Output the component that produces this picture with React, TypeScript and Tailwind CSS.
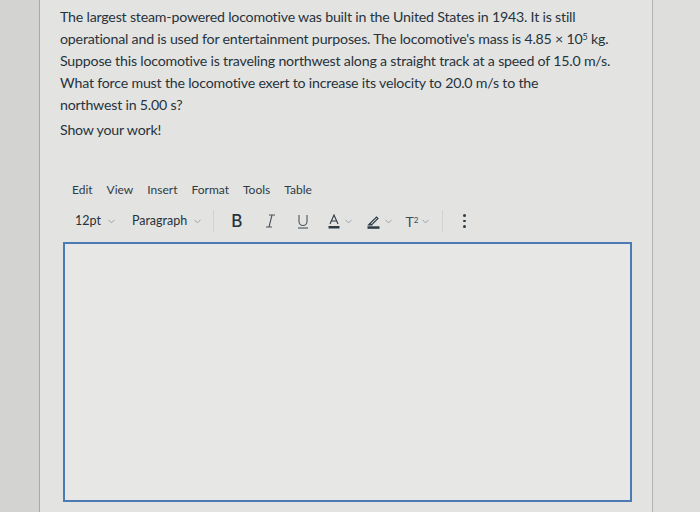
import { ChevronDown } from 'lucide-react';

const lines = [
  'The largest steam-powered locomotive was built in the United States in 1943. It is still',
  null,
  'Suppose this locomotive is traveling northwest along a straight track at a speed of 15.0 m/s.',
  'What force must the locomotive exert to increase its velocity to 20.0 m/s to the',
  'northwest in 5.00 s?',
];

function Caret() {
  return <ChevronDown size={11} strokeWidth={1.5} className="text-[#7a858c]" />;
}

export default function App() {
  return (
    <div
      className="flex h-[512px] w-[700px] overflow-hidden bg-[#dcdcdb] text-[#27333b]"
      style={{ fontFamily: 'Lato, "Open Sans", sans-serif' }}
    >
      <div className="w-[40px] shrink-0 border-r border-[#a9a9a9] bg-[#d3d3d2]" />
      <div className="flex w-[613px] shrink-0 flex-col border-r border-[#b3b3b3] bg-[#e3e3e2]">
        {/* Question text */}
        <div className="pl-[20px] pt-[6px] text-[14.2px] leading-[22px] tracking-[-0.2px]">
          {lines.map((l, i) =>
            l === null ? (
              <div key={i} className="whitespace-nowrap">
                operational and is used for entertainment purposes. The locomotive's mass is 4.85 × 10
                <sup className="text-[9px]">5</sup> kg.
              </div>
            ) : (
              <div key={i} className="whitespace-nowrap">{l}</div>
            )
          )}
          <div className="mt-[3px]">Show your work!</div>
        </div>

        {/* Menu bar */}
        <div className="ml-[32px] mt-[40px] flex gap-[14px] text-[12px] text-[#2d3b45]">
          <span>Edit</span>
          <span>View</span>
          <span>Insert</span>
          <span>Format</span>
          <span>Tools</span>
          <span>Table</span>
        </div>

        {/* Toolbar */}
        <div className="ml-[35px] mt-[11px] flex h-[22px] items-center text-[12.5px]">
          <span className="flex items-center gap-[5px]">12pt <Caret /></span>
          <span className="ml-[15px] flex items-center gap-[5px]">Paragraph <Caret /></span>
          <div className="ml-[10px] h-[22px] w-px bg-[#cfd3d5]" />
          <span className="ml-[17px] text-[17px] font-medium leading-none" style={{ fontFamily: 'Inter, "Liberation Sans", sans-serif' }}>B</span>
          <svg className="ml-[23px]" width="10" height="14" viewBox="0 0 10 14" fill="none" stroke="#4a555c" strokeWidth="1.1">
            <path d="M4 1 H10 M1 13 H7 M7 1 L4 13" />
          </svg>
          <svg className="ml-[22px]" width="12" height="15" viewBox="0 0 12 15" fill="none" stroke="#4a555c" strokeWidth="1.1">
            <path d="M2 1 V7.5 A4 4 0 0 0 10 7.5 V1" />
            <path d="M1 14 H11" />
          </svg>
          <span className="ml-[19px] flex items-center gap-[3px]">
            <svg width="12" height="15" viewBox="0 0 12 15" fill="none" stroke="#2d3b45" strokeWidth="1.1">
              <path d="M2 10 L6 1 L10 10 M3.4 7 H8.6" />
              <rect x="0.5" y="12" width="11" height="2.5" fill="#2d3b45" stroke="none" />
            </svg>
            <Caret />
          </span>
          <span className="ml-[13px] flex items-center gap-[3px]">
            <svg width="13" height="15" viewBox="0 0 13 15" fill="none" stroke="#2d3b45" strokeWidth="1.1">
              <path d="M3 9.5 L9.5 3 L11 4.5 L4.5 11 Z" />
              <path d="M3 9.5 L1.5 11 L3 11 L4.5 11" />
              <rect x="0.5" y="12.3" width="12" height="2.5" fill="#2d3b45" stroke="none" />
            </svg>
            <Caret />
          </span>
          <span className="ml-[11px] flex items-center gap-[2px]">
            <span className="text-[14px] text-[#3d4a52]">T<sup className="text-[8px]">2</sup></span>
            <Caret />
          </span>
          <div className="ml-[11px] h-[22px] w-px bg-[#cfd3d5]" />
          <span className="ml-[20px] flex flex-col gap-[3px]">
            <span className="h-[2.5px] w-[2.5px] rounded-full bg-[#2d3b45]" />
            <span className="h-[2.5px] w-[2.5px] rounded-full bg-[#2d3b45]" />
            <span className="h-[2.5px] w-[2.5px] rounded-full bg-[#2d3b45]" />
          </span>
        </div>

        {/* Editor area */}
        <div className="ml-[23px] mt-[10px] h-[260px] w-[569px] border-2 border-[#4b7bb4] bg-[#e7e7e6]" />
      </div>
      <div className="flex-1 bg-[#dededd]" />
    </div>
  );
}
